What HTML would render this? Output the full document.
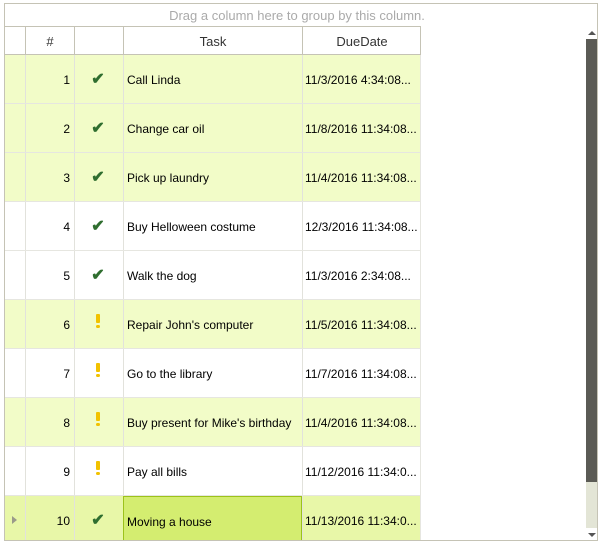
<!DOCTYPE html>
<html><head><style>
body{margin:0;width:604px;height:547px;background:#fff;font-family:"Liberation Sans",sans-serif;position:relative;overflow:hidden}
.box{position:absolute;left:4px;top:3px;width:594px;height:538px;border:1px solid #c5c3b5;box-sizing:border-box;overflow:hidden}
.grp{position:absolute;left:0;top:0;width:592px;height:23px;color:#aaa;font-size:13px;text-align:center;line-height:24px;padding-right:8px;box-sizing:border-box}
.hdr{position:absolute;top:22px;left:0;height:29px;width:416px;border-top:1px solid #c5c3b5;border-bottom:1px solid #c5c3b5;border-right:1px solid #c5c3b5;box-sizing:border-box}
.c{position:absolute;top:0;height:100%;box-sizing:border-box;border-left:1px solid #e2e2dc;font-size:12px}
.hdr .c{border-left:1px solid #c5c3b5;text-align:center;line-height:29px;color:#333;font-size:13px}
.row{position:absolute;left:0;width:416px;height:49px;border-bottom:1px solid #e6e6e0;box-sizing:border-box;border-right:1px solid #e6e6e0}
.row .c{line-height:50px;white-space:nowrap;overflow:hidden}
.num{text-align:right;padding-right:4px}
.ic{text-align:center}
.tk{padding-left:3px}
.ck{color:#2f6e2f;font-size:16px;font-weight:bold;position:relative;left:-1px}
.ex{display:inline-block;width:4px;height:9px;background:#f2c200;border-radius:1px;position:relative;top:-6px;left:-1px}
.ex:after{content:"";position:absolute;left:0;top:11px;width:4px;height:3px;background:#f2c200;border-radius:2px}
.sb{position:absolute;left:581px;top:22px;width:11px;height:514px}
.sb .th{position:absolute;left:0;top:13px;width:11px;height:443px;background:#5b5b55}
.sb .tr{position:absolute;left:0;top:456px;width:11px;height:46px;background:#e3e5d6}
</style></head><body>
<div class="box">
<div class="grp">Drag a column here to group by this column.</div>
<div class="hdr">
<div class="c" style="left:0;width:20px;border-left:none"></div>
<div class="c" style="left:20px;width:49px">#</div>
<div class="c" style="left:69px;width:49px"></div>
<div class="c" style="left:118px;width:179px">Task</div>
<div class="c" style="left:297px;width:119px">DueDate</div>
</div>
<div id="rows"></div>
<div class="sb">
<div style="position:absolute;left:2px;top:5px;width:0;height:0;border-left:4px solid transparent;border-right:4px solid transparent;border-bottom:4px solid #555"></div>
<div class="th"></div><div class="tr"></div>
<div style="position:absolute;left:2px;top:507px;width:0;height:0;border-left:4px solid transparent;border-right:4px solid transparent;border-top:4px solid #555"></div>
</div>
</div>
<script>
var d=[[1,1,"Call Linda","11/3/2016 4:34:08...",1],[2,1,"Change car oil","11/8/2016 11:34:08...",1],[3,1,"Pick up laundry","11/4/2016 11:34:08...",1],[4,1,"Buy Helloween costume","12/3/2016 11:34:08...",0],[5,1,"Walk the dog","11/3/2016 2:34:08...",0],[6,0,"Repair John's computer","11/5/2016 11:34:08...",1],[7,0,"Go to the library","11/7/2016 11:34:08...",0],[8,0,"Buy present for Mike's birthday","11/4/2016 11:34:08...",1],[9,0,"Pay all bills","11/12/2016 11:34:0...",0],[10,1,"Moving a house","11/13/2016 11:34:0...",2]];
var h="";d.forEach(function(r,i){var top=51+i*49;var bg=r[4]==1?"background:#f2fcc8;":r[4]==2?"background:#e8f7a8;":"";
var ic=r[1]?'<span class="ck">&#10004;</span>':'<span class="ex"></span>';
var tk=r[4]==2?'background:#d4ed70;border:1px solid #9cc21b;':'';
var ind=r[4]==2?'<div style="position:absolute;left:7px;top:20px;border-top:4px solid transparent;border-bottom:4px solid transparent;border-left:5px solid #9a9a8a"></div>':'';
h+='<div class="row" style="top:'+top+'px;'+bg+'"><div class="c" style="left:0;width:20px;border-left:none">'+ind+'</div><div class="c num" style="left:20px;width:49px">'+r[0]+'</div><div class="c ic" style="left:69px;width:49px">'+ic+'</div><div class="c tk" style="left:118px;width:179px;'+tk+'">'+r[2]+'</div><div class="c tk" style="left:297px;width:119px;padding-left:2px">'+r[3]+'</div></div>';});
document.getElementById("rows").innerHTML=h;
</script>
</body></html>
